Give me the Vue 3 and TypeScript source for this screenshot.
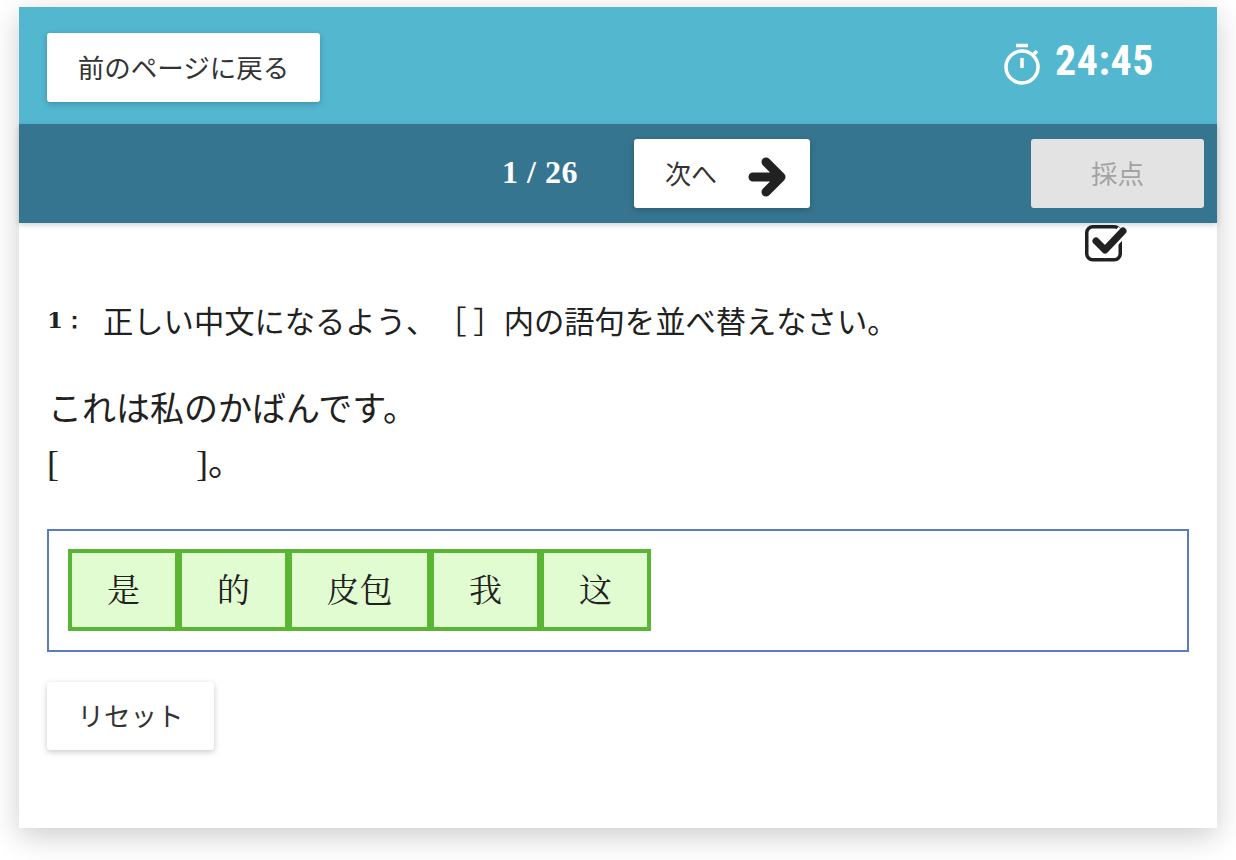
<script setup lang="ts">
const question = '正しい中文になるよう、［ ］内の語句を並べ替えなさい。'
const tiles = ['是', '的', '皮包', '我', '这']
</script>

<template>
  <div class="page">
    <div class="card">
      <header class="top">
        <button class="btn back">前のページに戻る</button>
        <div class="timer">
          <svg class="watch" width="38" height="44" viewBox="0 0 38 44" fill="none" stroke="#fff" stroke-width="3.500">
            <circle cx="18" cy="25" r="16" />
            <path d="M12 3.500h12M18 16v10" />
            <path d="M30 12l3-3" />
          </svg>
          <span class="clock">24:45</span>
        </div>
      </header>
      <div class="bar">
        <span class="count">1 / 26</span>
        <button class="btn next">
          <span>次へ</span>
          <svg width="40" height="40" viewBox="0 0 40 40" fill="none" stroke="#212121" stroke-width="9" stroke-linecap="round" stroke-linejoin="round">
            <path d="M5 20h28M18 5l15 15-15 15" />
          </svg>
        </button>
        <button class="btn score" disabled>採点</button>
      </div>
      <main class="body">
        <div class="check-row">
          <svg width="44" height="40" viewBox="0 0 44 40" fill="none">
            <rect x="1.750" y="4.750" width="33.500" height="33" rx="6" stroke="#212121" stroke-width="3.500" />
            <path d="M11 19l9 9 18-19" stroke="#fff" stroke-width="12" />
            <path d="M11 19l9 9 18-19" stroke="#212121" stroke-width="7" stroke-linecap="round" stroke-linejoin="round" />
          </svg>
        </div>
        <p class="question"><b>1：</b><span>{{ question }}</span></p>
        <p class="sentence">これは私のかばんです。</p>
        <p class="answer">[<span class="blank"></span>]。</p>
        <div class="tray">
          <div v-for="tile in tiles" :key="tile" class="tile">{{ tile }}</div>
        </div>
        <button class="btn reset">リセット</button>
      </main>
    </div>
  </div>
</template>

<style>
body {
  background: #fff;
}
</style>

<style scoped>
.page {
  padding: 7px 19px 32px;
  font-family: "Noto Sans CJK JP", sans-serif;
  color: #212121;
  text-spacing-trim: space-all;
}

.card {
  width: 1198px;
  height: 821px;
  background: #fff;
  box-shadow: 0 8px 28px rgba(0, 0, 0, 0.2);
}

.btn {
  display: block;
  padding: 0 0 3px;
  border: 0;
  border-radius: 3px;
  background: #fff;
  color: #333;
  font-family: inherit;
  font-size: 26.500px;
  box-shadow: 0 2px 6px rgba(0, 0, 0, 0.22);
}

.top {
  height: 117px;
  box-sizing: border-box;
  padding: 26px 63px 0 28px;
  display: flex;
  justify-content: space-between;
  background: #53b7d0;
}

.back {
  width: 273px;
  height: 69px;
}

.timer {
  display: flex;
  align-items: flex-start;
  gap: 13px;
  color: #fff;
}

.clock {
  font-family: Roboto, sans-serif;
  font-weight: 700;
  font-size: 42px;
  font-stretch: 75%;
  letter-spacing: 0.5px;
  line-height: 56px;
}

.watch {
  margin-top: 9px;
}

.bar {
  height: 99px;
  box-sizing: border-box;
  padding: 15px 13px 0 483px;
  display: flex;
  align-items: flex-start;
  background: #36758f;
  box-shadow: 0 2px 6px rgba(0, 0, 0, 0.18);
  position: relative;
}

.count {
  width: 132px;
  color: #fff;
  font-family: "Liberation Serif", serif;
  font-weight: 700;
  font-size: 32px;
  letter-spacing: 0.5px;
  line-height: 67px;
  white-space: nowrap;
}

.next {
  width: 176px;
  height: 69px;
  padding: 0 22px 0 31px;
  display: flex;
  align-items: center;
  justify-content: space-between;
  font-size: 26px;
}

.next span {
  margin-bottom: 3px;
}

.next svg {
  margin-top: 6px;
}

.score {
  width: 173px;
  height: 69px;
  margin-left: auto;
  background: #e3e3e3;
  color: #a3a3a3;
  box-shadow: none;
}

.body {
  padding: 0 28px;
}

.check-row {
  height: 40px;
  padding-left: 1038px;
  margin-top: -1px;
}

.check-row svg {
  display: block;
}

.question {
  margin: 37px 0 0;
  display: flex;
  align-items: center;
  font-size: 30.300px;
  line-height: 42px;
  white-space: nowrap;
}

.question b {
  width: 56px;
  font-family: "DejaVu Serif", serif;
  font-size: 23px;
}

.sentence {
  margin: 42px 0 0 1px;
  font-size: 34px;
  line-height: 48px;
}

.answer {
  margin: 12px 0 0;
  display: flex;
  font-family: "Liberation Serif", "Noto Sans CJK JP", serif;
  font-size: 36px;
  line-height: 42px;
}

.blank {
  width: 137px;
}

.tray {
  margin-top: 44px;
  width: 1142px;
  height: 123px;
  box-sizing: border-box;
  padding: 18px 19px;
  display: flex;
  border: 2px solid #5b7cc0;
}

.tile {
  box-sizing: border-box;
  min-width: 111px;
  height: 82px;
  padding: 0 34.500px 6px;
  display: flex;
  align-items: center;
  justify-content: center;
  border: 4px solid #5ab535;
  background: #e2fcd2;
  font-family: "Noto Serif CJK SC", "Noto Sans CJK SC", serif;
  font-size: 33px;
}

.tile + .tile {
  margin-left: -1px;
}

.reset {
  margin-top: 30px;
  width: 167px;
  height: 68px;
}
</style>
